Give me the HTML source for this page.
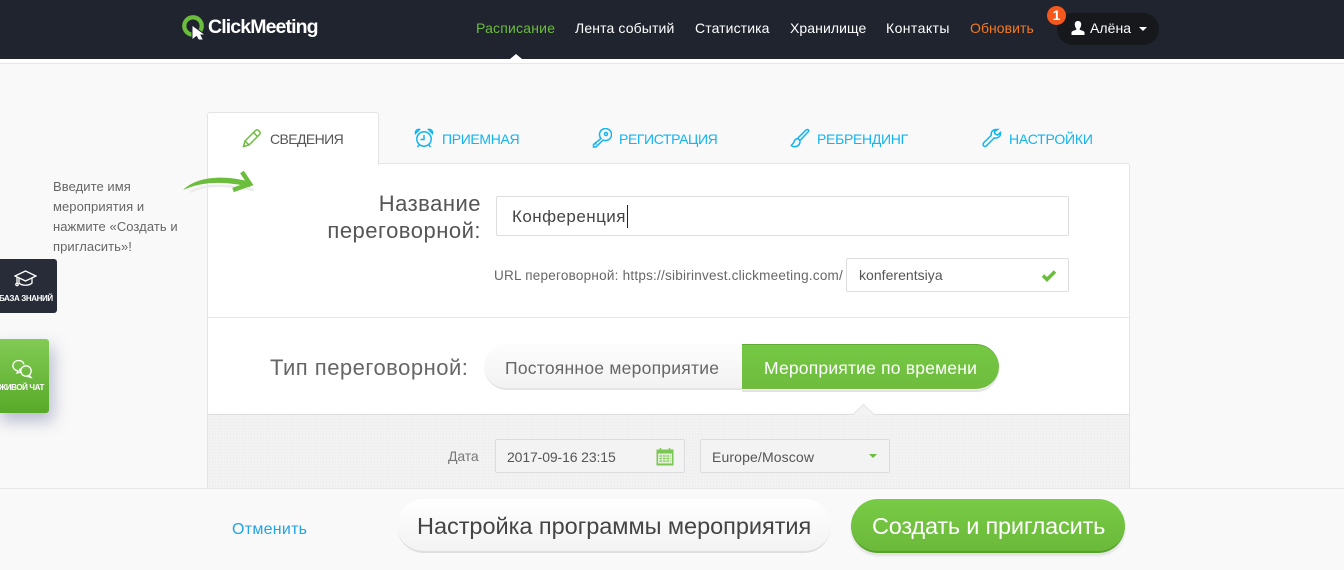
<!DOCTYPE html>
<html lang="ru"><head><meta charset="utf-8"><title>ClickMeeting</title>
<style>
*{box-sizing:border-box}
html,body{margin:0;padding:0}
body{width:1344px;height:570px;overflow:hidden;position:relative;background:#f9f9f9;font-family:"Liberation Sans",sans-serif}
.a{position:absolute;white-space:nowrap}
.nav{top:20px;font-size:14px;line-height:16px;color:#fff}
.tab{top:131px;font-size:14px;line-height:16px;color:#13b4ef}
.ic{position:absolute;fill:none}
</style></head><body>
<div class="a" style="left:0;top:0;width:1344px;height:59px;background:#20242f"></div>
<div class="a" style="left:0;top:59px;width:1344px;height:5px;background:#fff;border-bottom:1px solid #e6e6e6"></div>
<div class="a" style="left:510px;top:54px;width:0;height:0;border:6px solid transparent;border-top:0;border-bottom:5px solid #fff"></div>

<svg class="ic" style="left:180px;top:13px" width="30" height="28" viewBox="0 0 30 28"><circle cx="13" cy="13" r="8.700" stroke="#6bbd3c" stroke-width="4.300"/><path d="M12 12L25.500 22H21L23.500 27H18.500L16.500 23.500L12 27Z" fill="#fff" stroke="#20242f" stroke-width="1"/></svg>
<div class="a" style="left:208px;top:15px;font-size:19.500px;line-height:24px;font-weight:bold;color:#fff;letter-spacing:-.88px">ClickMeeting</div>

<div class="a nav" style="left:476px;color:#6bbd3c;letter-spacing:.2px">Расписание</div>
<div class="a nav" style="left:575px;letter-spacing:.13px">Лента событий</div>
<div class="a nav" style="left:695px;letter-spacing:.1px">Статистика</div>
<div class="a nav" style="left:790px;letter-spacing:.08px">Хранилище</div>
<div class="a nav" style="left:886px;letter-spacing:.42px">Контакты</div>
<div class="a nav" style="left:970px;color:#f47a20;letter-spacing:.05px">Обновить</div>

<div class="a" style="left:1057px;top:13px;width:102px;height:32px;border-radius:16px;background:#16181c"></div>
<div class="a" style="left:1047px;top:6px;width:19px;height:19px;border-radius:50%;background:#f4581c;color:#fff;font-size:14px;font-weight:bold;line-height:19px;text-align:center">1</div>
<svg class="ic" style="left:1070px;top:20px" width="16" height="16" viewBox="0 0 16 16"><path d="M8 1c2.300 0 3.400 1.700 3.200 3.800C11 6.800 10.300 8 9.700 8.600v1.200c1.800.6 4.300 1.200 4.800 2.500V15H1.500v-2.700c.5-1.300 3-1.900 4.800-2.500V8.600C5.700 8 5 6.800 4.800 4.800 4.600 2.700 5.700 1 8 1z" fill="#fff"/></svg>
<div class="a nav" style="left:1090px;letter-spacing:.05px">Алёна</div>
<div class="a" style="left:1139px;top:27px;width:0;height:0;border:4px solid transparent;border-bottom:0;border-top:4px solid #fff"></div>

<!-- panel -->
<div class="a" style="left:207px;top:163px;width:923px;height:326px;background:#fff;border:1px solid #e4e4e4;border-radius:0 3px 0 0"></div>
<div class="a" style="left:207px;top:112px;width:172px;height:53px;background:#fff;border:1px solid #e4e4e4;border-bottom:0;border-radius:3px 3px 0 0"></div>
<div class="a" style="left:208px;top:317px;width:921px;height:1px;background:#e8e8e8"></div>
<div class="a" style="left:208px;top:414px;width:921px;height:75px;background:#f3f3f3;background-image:radial-gradient(#eeeeee 1px,transparent 1px);background-size:3px 3px;border-top:1px solid #dedede"></div>
<svg class="ic" style="left:852px;top:403px" width="24" height="13" viewBox="0 0 24 13"><path d="M1 12L11.500 1.500 22 12z" fill="#f3f3f3"/><path d="M1 11.500L11.500 1.500 22 11.500" stroke="#e4e4e4"/></svg>

<!-- tabs -->
<svg class="ic" style="left:242px;top:128px" width="20" height="20" viewBox="0 0 20 20" stroke="#6bbd3c" stroke-width="1.500"><path d="M1.500 18.500l1.500-5.500L13.500 2.500c1-1 2-1 3 0l1 1c1 1 1 2 0 3L7 17zM3 13l4 4M11.500 4.500l4 4"/></svg>
<div class="a tab" style="left:270px;color:#555;letter-spacing:-.6px">СВЕДЕНИЯ</div>
<svg class="ic" style="left:414px;top:128px" width="20" height="20" viewBox="0 0 20 20" stroke="#13b4ef" stroke-width="1.500"><circle cx="10" cy="11" r="7.200"/><path d="M10 7v4.500H6.500M1.500 5.500C1 3 3 1 5.500 1.500zM18.500 5.500C19 3 17 1 14.500 1.500zM5 17l-1.500 2M15 17l1.500 2"/></svg>
<div class="a tab" style="left:442px;letter-spacing:-.35px">ПРИЕМНАЯ</div>
<svg class="ic" style="left:592px;top:128px" width="20" height="20" viewBox="0 0 20 20" stroke="#13b4ef" stroke-width="1.500"><path d="M9 10.500A6 6 0 1 1 11 12L4 19H1.500V16.500zM4.500 15.500l-1 1"/><circle cx="14" cy="6" r="1.500"/></svg>
<div class="a tab" style="left:619px;letter-spacing:-.4px">РЕГИСТРАЦИЯ</div>
<svg class="ic" style="left:790px;top:128px" width="20" height="20" viewBox="0 0 20 20" stroke="#13b4ef" stroke-width="1.500"><path d="M17.500 1.500c1 0 1.500 1 1 2L10 12.500 7.500 10.500 16 2zM7.500 10.500c-2 .5-3 1.500-3.500 3.500-.3 1-1.500 2-2.700 3.500 .7 1 2.700 1.500 4.700 1 3-.7 4.500-3.500 4-6"/></svg>
<div class="a tab" style="left:817px;letter-spacing:-.3px">РЕБРЕНДИНГ</div>
<svg class="ic" style="left:982px;top:128px" width="20" height="20" viewBox="0 0 20 20" stroke="#13b4ef" stroke-width="1.500"><path d="M14 1.500c-3 0-5.500 2.500-4.700 5.800L1.500 15c-.7 1-.5 2 0 2.700.8.900 2 1 2.800.2l8-8c3 1 6.700-1.400 6.200-5.400L15.500 7l-2.500-1-.5-2.500L15.500 1.500z"/></svg>
<div class="a tab" style="left:1009px;letter-spacing:-.2px">НАСТРОЙКИ</div>

<!-- hint -->
<div class="a" style="left:53px;top:177px;font-size:13px;line-height:20px;color:#666;letter-spacing:.07px">Введите имя<br>мероприятия и<br>нажмите «Создать и<br>пригласить»!</div>
<svg class="ic" style="left:180px;top:166px" width="80" height="32" viewBox="0 0 80 32"><path d="M10 26C26 18 44 18 74 24" stroke="#ececec" stroke-width="2.500"/><path d="M3 24C16 11 42 8 71 16L70 21C46 15 22 15 3 24Z" fill="#6bbd3c"/><path d="M62 6L70 18 53 24" stroke="#6bbd3c" stroke-width="4.500"/></svg>

<!-- side buttons -->
<div class="a" style="left:-4px;top:259px;width:61px;height:54px;background:#282c38;border-radius:3px"></div>
<svg class="ic" style="left:14px;top:270px" width="23" height="18" viewBox="0 0 23 18" stroke="#fff" stroke-width="1.300"><path d="M1 6l10.500-5L22 6l-10.500 5zM5 8.500V13c3 3 10 3 13 0V8.500M3 7v6"/><circle cx="3" cy="14.500" r="1.200"/></svg>
<div class="a" style="left:-1px;top:294px;font-size:8px;line-height:10px;font-weight:bold;color:#fff;letter-spacing:-.4px">БАЗА ЗНАНИЙ</div>

<div class="a" style="left:-4px;top:339px;width:53px;height:74px;border-radius:3px;background:linear-gradient(#82cb55,#58a928);box-shadow:4px 8px 16px rgba(60,70,130,.35)"></div>
<svg class="ic" style="left:11px;top:359px" width="22" height="20" viewBox="0 0 22 20" stroke="#fff" stroke-width="1.300"><path d="M9 9.500c-.5 2 .2 3 .8 3.500L6 14l1-2C3 11 1.500 9 2 6 2.500 3 5 1.500 7.500 1.500c3 0 5 1.500 5.500 4"/><circle cx="15" cy="12" r="5.200"/><path d="M18 16l2 2.500-3.500-1"/></svg>
<div class="a" style="left:-1px;top:383px;font-size:8px;line-height:10px;font-weight:bold;color:#fff;letter-spacing:-.4px">ЖИВОЙ ЧАТ</div>

<!-- name -->
<div class="a" style="left:300px;top:190px;width:181px;text-align:right;font-size:22px;line-height:27px;color:#555;letter-spacing:.5px;white-space:normal">Название переговорной:</div>
<div class="a" style="left:496px;top:196px;width:573px;height:40px;background:#fff;border:1px solid #dedede;border-radius:2px"></div>
<div class="a" style="left:512px;top:206px;font-size:17px;line-height:21px;color:#444;letter-spacing:.45px">Конференция</div>
<div class="a" style="left:627px;top:205px;width:1px;height:23px;background:#222"></div>
<div class="a" style="left:494px;top:267px;font-size:13.500px;line-height:17px;color:#666;letter-spacing:.24px">URL переговорной: https://sibirinvest.clickmeeting.com/</div>
<div class="a" style="left:846px;top:258px;width:223px;height:34px;background:#fff;border:1px solid #dedede;border-radius:2px"></div>
<div class="a" style="left:859px;top:267px;font-size:14px;line-height:17px;color:#555;letter-spacing:.03px">konferentsiya</div>
<svg class="ic" style="left:1041px;top:269px" width="16" height="13" viewBox="0 0 16 13"><path d="M2 6.500l4 4 8-8" stroke="#6bbd3c" stroke-width="3.500"/></svg>

<!-- type -->
<div class="a" style="left:270px;top:354px;font-size:22px;line-height:28px;color:#666;letter-spacing:.5px">Тип переговорной:</div>
<div class="a" style="left:484px;top:344px;width:270px;height:46px;border-radius:23px 0 0 23px;background:linear-gradient(#fdfdfd,#f2f2f2);border-bottom:2px solid #e4e4e4"></div>
<div class="a" style="left:505px;top:357px;font-size:17.500px;line-height:22px;color:#666;letter-spacing:.24px">Постоянное мероприятие</div>
<div class="a" style="left:742px;top:344px;width:257px;height:46px;border-radius:0 23px 23px 0;background:linear-gradient(#74c843,#6fbc3e);border-top:1px solid #5ea833;border-bottom:1px solid #fff;box-shadow:0 2px 0 #e2e2e2"></div>
<div class="a" style="left:764px;top:357px;font-size:17.500px;line-height:22px;color:#fff;letter-spacing:.19px">Мероприятие по времени</div>

<!-- date -->
<div class="a" style="left:448px;top:447px;font-size:14px;line-height:18px;color:#777;letter-spacing:-.1px">Дата</div>
<div class="a" style="left:495px;top:439px;width:190px;height:34px;background:#f3f3f3;border:1px solid #dcdcdc;border-radius:2px"></div>
<div class="a" style="left:507px;top:448px;font-size:14px;line-height:18px;color:#555;letter-spacing:-.12px">2017-09-16 23:15</div>
<svg class="ic" style="left:656px;top:448px" width="18" height="18" viewBox="0 0 18 18"><rect x="0.500" y="1.500" width="17" height="16" fill="#7cc653"/><rect x="2" y="5.500" width="14" height="10" fill="#dff0d4"/><path d="M3.500 8h11M3.500 10.500h11M3.500 13h11" stroke="#7cc653" stroke-width="1.300" stroke-dasharray="2.500 1"/><path d="M4.500 0v3M13.500 0v3" stroke="#7cc653" stroke-width="1.500"/></svg>
<div class="a" style="left:700px;top:439px;width:190px;height:34px;background:#f3f3f3;border:1px solid #dcdcdc;border-radius:2px"></div>
<div class="a" style="left:712px;top:448px;font-size:14px;line-height:18px;color:#555;letter-spacing:.13px">Europe/Moscow</div>
<div class="a" style="left:869px;top:454px;width:0;height:0;border:4px solid transparent;border-bottom:0;border-top:4px solid #6bbd3c"></div>

<!-- footer -->
<div class="a" style="left:0;top:488px;width:1344px;height:82px;background:#f9f9f9;border-top:1px solid #e6e6e6"></div>
<div class="a" style="left:232px;top:520px;font-size:16px;line-height:20px;color:#1fa4e4;letter-spacing:.27px">Отменить</div>
<div class="a" style="left:397px;top:499px;width:434px;height:54px;border-radius:27px;background:linear-gradient(#fff,#f3f3f3);border-bottom:2px solid #dedede"></div>
<div class="a" style="left:417px;top:512px;font-size:23.500px;line-height:28px;color:#444;letter-spacing:-.03px">Настройка программы мероприятия</div>
<div class="a" style="left:851px;top:499px;width:274px;height:54px;border-radius:27px;background:linear-gradient(#78cb45,#6bb93a);border-bottom:2px solid #56a22d;box-shadow:0 3px 2px #e2e2e2"></div>
<div class="a" style="left:872px;top:512px;font-size:23.500px;line-height:28px;color:#fff;letter-spacing:-.2px">Создать и пригласить</div>
</body></html>
